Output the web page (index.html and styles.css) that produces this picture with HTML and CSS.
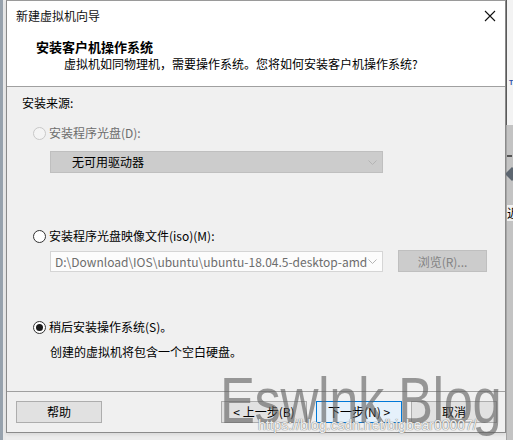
FILE: index.html
```html
<!DOCTYPE html>
<html lang="zh-CN">
<head>
<meta charset="utf-8">
<title>新建虚拟机向导</title>
<link rel="stylesheet" href="styles.css">
</head>
<body>
<div class="desk">
  <div class="edge-left"></div>
  <div class="dialog">
    <div class="titlebar">
      <span class="title">新建虚拟机向导</span>
      <svg class="close" width="12" height="12" viewBox="0 0 12 12"><path d="M1 1 L11 11 M11 1 L1 11" stroke="#111" stroke-width="1.1" fill="none"/></svg>
    </div>
    <div class="header">
      <div class="h-title">安装客户机操作系统</div>
      <div class="h-sub">虚拟机如同物理机，需要操作系统。您将如何安装客户机操作系统?</div>
    </div>
    <div class="body">
      <div class="src">安装来源:</div>
      <div class="opt opt-1">
        <span class="radio disabled"></span><span class="lbl dim">安装程序光盘(D):</span>
      </div>
      <div class="select disabled-sel">
        <span class="sel-text">无可用驱动器</span>
        <svg class="chev" width="9" height="5" viewBox="0 0 9 5"><path d="M0.5 0.5 L4.5 4.5 L8.5 0.5" stroke="#b4b4b4" fill="none"/></svg>
      </div>
      <div class="opt opt-2">
        <span class="radio"></span><span class="lbl">安装程序光盘映像文件(iso)(M):</span>
      </div>
      <div class="iso-row">
        <div class="select iso-sel">
          <span class="sel-path">D:\Download\IOS\ubuntu\ubuntu-18.04.5-desktop-amd</span>
          <svg class="chev" width="9" height="5" viewBox="0 0 9 5"><path d="M0.5 0.5 L4.5 4.5 L8.5 0.5" stroke="#b4b4b4" fill="none"/></svg>
        </div>
        <div class="browse">浏览(R)...</div>
      </div>
      <div class="opt opt-3">
        <span class="radio checked"></span><span class="lbl">稍后安装操作系统(S)。</span>
      </div>
      <div class="note">创建的虚拟机将包含一个空白硬盘。</div>
    </div>
    <div class="footer">
      <div class="btn">帮助</div>
      <div class="spacer"></div>
      <div class="btn">&lt; 上一步(B)</div>
      <div class="btn primary">下一步(N) &gt;</div>
      <div class="btn plain">取消</div>
    </div>
  </div>
  <div class="edge-right">
    <div class="er-top"><span class="er-t">T</span></div>
    <div class="er-mid">
      <div class="er-dash"></div>
      <div class="er-diamond"></div>
      <div class="er-char">近</div>
    </div>
  </div>
</div>
<div class="watermark">Eswlnk Blog</div>
<div class="wm-url">https://blog.csdn.net/bigbear00007/</div>
</body>
</html>
```

FILE: styles.css
```css
* { box-sizing: border-box; }
html, body { margin: 0; padding: 0; }
body {
  width: 513px;
  height: 440px;
  overflow: hidden;
  background: #ececec;
  font-family: "Noto Sans CJK SC", "Noto Sans", sans-serif;
  font-size: 12px;
  color: #000;
  position: relative;
}
.desk {
  display: flex;
  height: 440px;
}
.edge-left {
  width: 6px;
  height: 440px;
  background: linear-gradient(to right, #97a2ad 0, #97a2ad 3px, #e9e9e9 3px);
}
.dialog {
  width: 500px;
  height: 433px;
  border: 1px solid #8a8a8a;
  border-top-color: #9a9a9a;
  background: #f0f0f0;
  display: flex;
  flex-direction: column;
  box-shadow: 0 2px 3px rgba(0,0,0,0.08);
}
.titlebar {
  height: 29px;
  background: #fff;
  display: flex;
  align-items: center;
  justify-content: space-between;
  padding: 0 9px 0 9px;
}
.title { line-height: 16px; color: #111; }
.header {
  height: 57px;
  background: #fff;
  border-bottom: 1px solid #a0a0a0;
  padding: 9px 0 0 29px;
}
.h-title {
  font-weight: bold;
  font-size: 13px;
  line-height: 16px;
}
.h-sub {
  margin: 1px 0 0 28px;
  line-height: 16px;
}
.body {
  height: 304px;
  padding: 0 0 0 15px;
  display: flex;
  flex-direction: column;
}
.src { margin-top: 8px; line-height: 16px; }
.opt {
  display: flex;
  align-items: center;
  height: 16px;
  margin-left: 11px;
}
.opt-1 { margin-top: 14px; }
.opt-2 { margin-top: 55px; }
.opt-3 { margin-top: 47px; }
.radio {
  width: 13px;
  height: 13px;
  border-radius: 50%;
  border: 1px solid #333;
  background: #fff;
  margin-right: 3px;
  flex: none;
  display: flex;
  align-items: center;
  justify-content: center;
}
.radio.disabled { border-color: #c8c8c8; background: #f4f4f4; }
.radio.checked::after {
  content: "";
  width: 7px;
  height: 7px;
  border-radius: 50%;
  background: #1a1a1a;
}
.lbl { line-height: 16px; }
.dim { color: #6d6d6d; }
.select {
  width: 333px;
  height: 22px;
  margin-left: 28px;
  display: flex;
  align-items: center;
  justify-content: space-between;
  padding: 0 5px 0 0;
  border: 1px solid #c3c3c3;
}
.chev { flex: none; }
.disabled-sel {
  margin-top: 10px;
  background: #cccccc;
  border-color: #bfbfbf;
}
.sel-text { padding-left: 21px; line-height: 16px; }
.iso-row {
  display: flex;
  align-items: center;
  margin-top: 6px;
  height: 22px;
}
.iso-sel {
  height: 21px;
  background: #fcfcfc;
  border-color: #d5d5d5;
  margin-top: 1px;
}
.sel-path {
  padding-left: 4px;
  padding-right: 8px;
  color: #6d6d6d;
  line-height: 16px;
  white-space: nowrap;
  overflow: hidden;
  min-width: 0;
}
.browse {
  width: 89px;
  height: 22px;
  margin-left: 15px;
  background: #cccccc;
  border: 1px solid #bfbfbf;
  color: #838383;
  display: flex;
  align-items: center;
  justify-content: center;
}
.note { margin: 9px 0 0 28px; line-height: 16px; }
.footer {
  flex: 1;
  border-top: 1px solid #a0a0a0;
  display: flex;
  align-items: flex-start;
  padding: 9px 8px 0 9px;
  gap: 9px;
}
.spacer { flex: 1; }
.btn {
  width: 86px;
  height: 22px;
  background: #e1e1e1;
  border: 1px solid #adadad;
  display: flex;
  align-items: center;
  justify-content: center;
  line-height: 16px;
}
.btn.primary { background: #e5f1fb; border-color: #0078d7; }
.btn.plain { background: #e1e1e1; border-color: #adadad; }
.edge-right {
  width: 7px;
  height: 440px;
  background: #ececec;
  display: flex;
  flex-direction: column;
  overflow: hidden;
}
.er-top {
  height: 125px;
  background: #f3f3f3;
  border-left: 1px solid #5a5a5a;
  position: relative;
}
.er-t {
  position: absolute;
  left: 2px;
  top: 79px;
  font-family: "Liberation Sans", sans-serif;
  font-size: 7px;
  font-weight: bold;
  color: #2b4fa8;
}
.er-mid {
  height: 315px;
  background: #c3c3c3;
  border-left: 1px solid #a5a5a5;
  position: relative;
}
.er-dash { position: absolute; left: 0; top: 30px; width: 5px; height: 2px; background: #555; }
.er-diamond { position: absolute; left: 0; top: 44px; width: 10px; height: 10px; background: #5d6670; transform: rotate(45deg); }
.er-char {
  position: absolute;
  left: 0;
  top: 80px;
  width: 12px;
  height: 16px;
  line-height: 16px;
  background: #f0f0f0;
  font-size: 12px;
}
.watermark {
  position: absolute;
  left: 220px;
  top: 364px;
  font-family: "Liberation Sans", sans-serif;
  font-size: 64px;
  line-height: 74px;
  color: rgba(95, 95, 95, 0.62);
  white-space: nowrap;
  transform: scaleX(0.82);
  transform-origin: left top;
  letter-spacing: -0.5px;
}
.wm-url {
  position: absolute;
  left: 258px;
  top: 417px;
  font-family: "Liberation Sans", sans-serif;
  font-size: 14px;
  line-height: 16px;
  color: rgba(255, 255, 255, 0.9);
  text-shadow: 0 0 1px #7a7a7a, 0 0 1px #7a7a7a;
  white-space: nowrap;
}
```
